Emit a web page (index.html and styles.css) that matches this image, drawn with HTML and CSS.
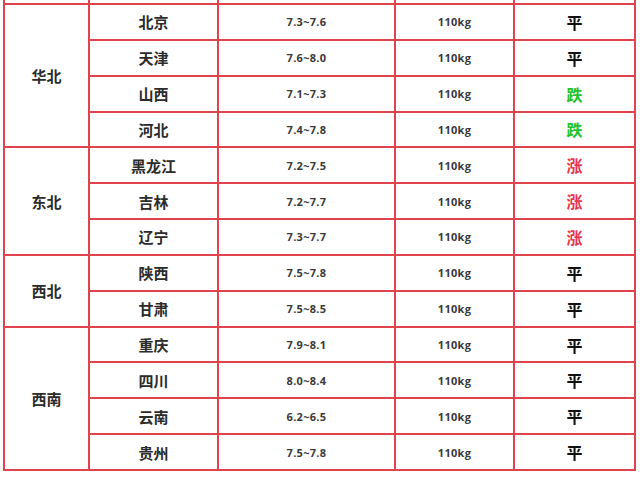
FILE: index.html
```html
<!DOCTYPE html>
<html lang="zh-CN">
<head>
<meta charset="utf-8">
<title>价格表</title>
<link rel="stylesheet" href="styles.css">
</head>
<body>
<table class="price-table">
  <colgroup>
    <col class="c-region"><col class="c-prov"><col class="c-price"><col class="c-weight"><col class="c-trend">
  </colgroup>
  <tr class="head-stub"><td></td><td></td><td></td><td></td><td></td></tr>
  <tr><td class="region" rowspan="4">华北</td><td class="prov">北京</td><td class="num">7.3~7.6</td><td class="num">110kg</td><td class="trend flat">平</td></tr>
  <tr><td class="prov">天津</td><td class="num">7.6~8.0</td><td class="num">110kg</td><td class="trend flat">平</td></tr>
  <tr><td class="prov">山西</td><td class="num">7.1~7.3</td><td class="num">110kg</td><td class="trend down">跌</td></tr>
  <tr><td class="prov">河北</td><td class="num">7.4~7.8</td><td class="num">110kg</td><td class="trend down">跌</td></tr>
  <tr><td class="region" rowspan="3">东北</td><td class="prov">黑龙江</td><td class="num">7.2~7.5</td><td class="num">110kg</td><td class="trend up">涨</td></tr>
  <tr><td class="prov">吉林</td><td class="num">7.2~7.7</td><td class="num">110kg</td><td class="trend up">涨</td></tr>
  <tr><td class="prov">辽宁</td><td class="num">7.3~7.7</td><td class="num">110kg</td><td class="trend up">涨</td></tr>
  <tr><td class="region" rowspan="2">西北</td><td class="prov">陕西</td><td class="num">7.5~7.8</td><td class="num">110kg</td><td class="trend flat">平</td></tr>
  <tr><td class="prov">甘肃</td><td class="num">7.5~8.5</td><td class="num">110kg</td><td class="trend flat">平</td></tr>
  <tr><td class="region" rowspan="4">西南</td><td class="prov">重庆</td><td class="num">7.9~8.1</td><td class="num">110kg</td><td class="trend flat">平</td></tr>
  <tr><td class="prov">四川</td><td class="num">8.0~8.4</td><td class="num">110kg</td><td class="trend flat">平</td></tr>
  <tr><td class="prov">云南</td><td class="num">6.2~6.5</td><td class="num">110kg</td><td class="trend flat">平</td></tr>
  <tr><td class="prov">贵州</td><td class="num">7.5~7.8</td><td class="num">110kg</td><td class="trend flat">平</td></tr>
</table>
</body>
</html>
```
FILE: styles.css
```css
html, body {
  margin: 0;
  padding: 0;
  background: #ffffff;
}
body {
  font-family: "Noto Sans CJK SC", "Open Sans", sans-serif;
  color: #333333;
}
.price-table {
  border-collapse: collapse;
  table-layout: fixed;
  width: 633px;
  margin-left: 3px;
}
.c-region { width: 85px; }
.c-prov { width: 129px; }
.c-price { width: 177px; }
.c-weight { width: 119px; }
.c-trend { width: 121px; }
.price-table td {
  border: 2px solid #e0434b;
  height: 33.85px;
  padding: 0;
  text-align: center;
  vertical-align: middle;
  line-height: 1;
}
.price-table .head-stub td {
  border-top: none;
  height: 3px;
}
.region, .prov {
  font-size: 15px;
  font-weight: 700;
  color: #2b2b2b;
}
.num {
  font-family: "Open Sans", "Noto Sans CJK SC", sans-serif;
  font-size: 11px;
  font-weight: 700;
  color: #3a3a3a;
  letter-spacing: 0.3px;
}
.trend {
  font-size: 16px;
  font-weight: 700;
}
.trend.flat { color: #111111; }
.trend.down { color: #22c32a; }
.trend.up { color: #e8334f; }
```
